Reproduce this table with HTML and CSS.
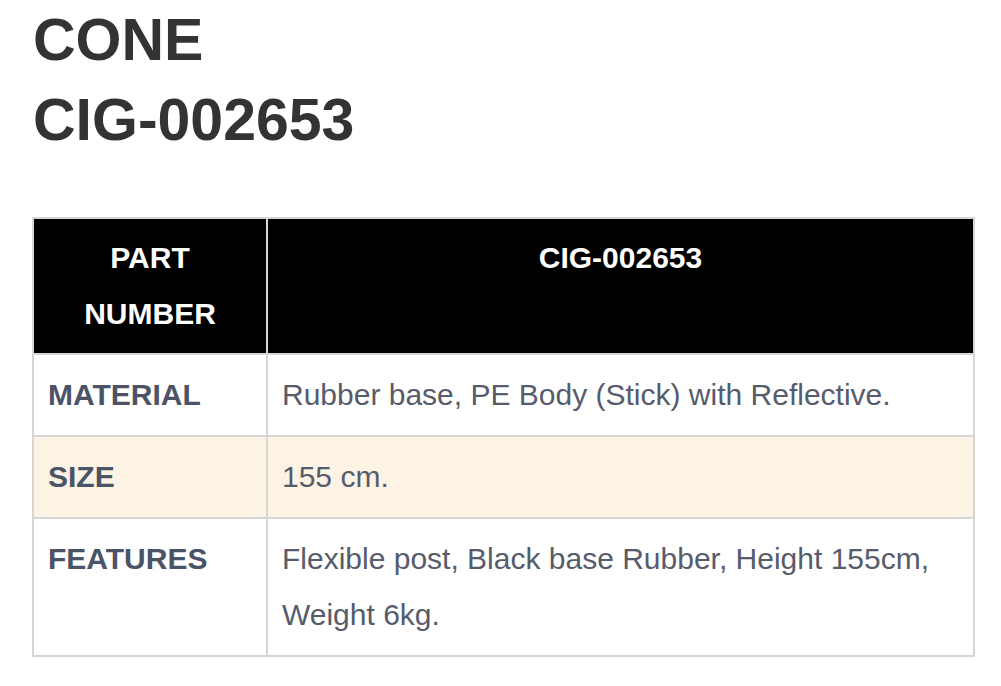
FILE: index.html
```html
<!DOCTYPE html>
<html lang="en">
<head>
<meta charset="utf-8">
<title>CONE CIG-002653</title>
<link rel="stylesheet" href="styles.css">
</head>
<body>
<div class="page">
  <h1 class="title">CONE<br>CIG-002653</h1>
  <table class="spec">
    <thead>
      <tr>
        <th class="col-label">PART<br>NUMBER</th>
        <th class="col-value">CIG-002653</th>
      </tr>
    </thead>
    <tbody>
      <tr>
        <td class="label">MATERIAL</td>
        <td class="value">Rubber base, PE Body (Stick) with Reflective.</td>
      </tr>
      <tr class="alt">
        <td class="label">SIZE</td>
        <td class="value">155 cm.</td>
      </tr>
      <tr>
        <td class="label">FEATURES</td>
        <td class="value">Flexible post, Black base Rubber, Height 155cm,<br>Weight 6kg.</td>
      </tr>
    </tbody>
  </table>
</div>
</body>
</html>
```
FILE: styles.css
```css
html, body {
  margin: 0;
  padding: 0;
  background: #ffffff;
}

.page {
  padding: 0 0 0 32px;
  font-family: "Liberation Sans", Arial, sans-serif;
}

.title {
  margin: 0 0 57px 1px;
  font-size: 59px;
  line-height: 80px;
  font-weight: bold;
  color: #333333;
}

.spec {
  width: 943px;
  border-collapse: collapse;
  border: 2px solid #d6d6d6;
  font-size: 30px;
  line-height: 56px;
}

.spec th,
.spec td {
  border: 2px solid #d6d6d6;
  padding: 12px 14px;
  vertical-align: top;
}

.spec th {
  padding-top: 11px;
  padding-bottom: 11px;
  background: #000000;
  color: #ffffff;
  font-weight: bold;
  text-align: center;
}

.col-label {
  width: 204px;
}

.label {
  font-weight: bold;
  color: #4b5367;
}

.value {
  color: #565c6b;
  padding-left: 15px;
}

.alt td {
  background: #fdf3e4;
}
```
